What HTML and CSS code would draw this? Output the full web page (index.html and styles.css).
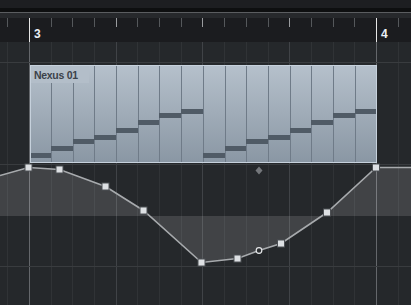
FILE: index.html
```html
<!DOCTYPE html>
<html lang="en">
<head>
    <meta charset="UTF-8">
    <title>Key Editor - Nexus 01</title>
    <link rel="stylesheet" href="styles.css">
</head>
<body>
    <div class="top-strip"></div>
    <div class="top-gap"></div>
    <div class="top-edge"></div>
    <div class="top-band"></div>

    <div class="ruler">
        <div class="tick"></div>
        <div class="tick bar"><span class="bar-num">3</span></div>
        <div class="tick"></div>
        <div class="tick"></div>
        <div class="tick"></div>
        <div class="tick beat"></div>
        <div class="tick"></div>
        <div class="tick"></div>
        <div class="tick"></div>
        <div class="tick beat"></div>
        <div class="tick"></div>
        <div class="tick"></div>
        <div class="tick"></div>
        <div class="tick beat"></div>
        <div class="tick"></div>
        <div class="tick"></div>
        <div class="tick"></div>
        <div class="tick bar"><span class="bar-num">4</span></div>
        <div class="tick"></div>
    </div>

    <div class="arrange">
        <!-- backdrop grid, sits under the lanes -->
        <div class="grid-cols">
            <div class="col"></div>
            <div class="col bar"></div>
            <div class="col"></div>
            <div class="col"></div>
            <div class="col"></div>
            <div class="col beat"></div>
            <div class="col"></div>
            <div class="col"></div>
            <div class="col"></div>
            <div class="col beat"></div>
            <div class="col"></div>
            <div class="col"></div>
            <div class="col"></div>
            <div class="col beat"></div>
            <div class="col"></div>
            <div class="col"></div>
            <div class="col"></div>
            <div class="col bar"></div>
            <div class="col"></div>
        </div>

        <div class="lane lane-head"></div>

        <div class="lane lane-part">
            <div class="part">
                <div class="part-title">Nexus 01</div>
                <div class="cells">
                    <div class="cell"><div class="note" style="margin-top: 87px"></div></div>
                    <div class="cell"><div class="note" style="margin-top: 80px"></div></div>
                    <div class="cell"><div class="note" style="margin-top: 73px"></div></div>
                    <div class="cell"><div class="note" style="margin-top: 69px"></div></div>
                    <div class="cell"><div class="note" style="margin-top: 62px"></div></div>
                    <div class="cell"><div class="note" style="margin-top: 54px"></div></div>
                    <div class="cell"><div class="note" style="margin-top: 47px"></div></div>
                    <div class="cell"><div class="note" style="margin-top: 43px"></div></div>
                    <div class="cell"><div class="note" style="margin-top: 87px"></div></div>
                    <div class="cell"><div class="note" style="margin-top: 80px"></div></div>
                    <div class="cell"><div class="note" style="margin-top: 73px"></div></div>
                    <div class="cell"><div class="note" style="margin-top: 69px"></div></div>
                    <div class="cell"><div class="note" style="margin-top: 62px"></div></div>
                    <div class="cell"><div class="note" style="margin-top: 54px"></div></div>
                    <div class="cell"><div class="note" style="margin-top: 47px"></div></div>
                    <div class="cell"><div class="note" style="margin-top: 43px"></div></div>
                </div>
            </div>
        </div>

        <div class="lane lane-auto">
            <svg class="auto-curve" width="411" height="101" viewBox="0 165 411 101">
                <polygon class="auto-fill" points="0,216 0,175.5 28.5,167.5 59.5,169.5 105.5,186.5 143.5,210.5 201.5,262.5 237.5,258.5 259,250.5 281,243.5 327,212.5 376,167.5 411,167.5 411,216"/>
                <polyline class="auto-line" points="0,175.5 28.5,167.5 59.5,169.5 105.5,186.5 143.5,210.5 201.5,262.5 237.5,258.5 259,250.5 281,243.5 327,212.5 376,167.5 411,167.5"/>
                <rect class="auto-pt" x="25" y="164" width="7" height="7"/>
                <rect class="auto-pt" x="56" y="166" width="7" height="7"/>
                <rect class="auto-pt" x="102" y="183" width="7" height="7"/>
                <rect class="auto-pt" x="140" y="207" width="7" height="7"/>
                <rect class="auto-pt" x="198" y="259" width="7" height="7"/>
                <rect class="auto-pt" x="234" y="255" width="7" height="7"/>
                <circle class="auto-ghost" cx="259" cy="250.5" r="2.8"/>
                <rect class="auto-pt" x="277.5" y="240" width="7" height="7"/>
                <rect class="auto-pt" x="323.5" y="209" width="7" height="7"/>
                <rect class="auto-pt" x="372.5" y="164" width="7" height="7"/>
                <polygon class="auto-mark" points="259,166.5 262.5,170.5 259,174.5 255.5,170.5"/>
            </svg>
        </div>

        <div class="lane lane-foot"></div>
    </div>
</body>
</html>
```

FILE: styles.css
```css
:root {
    --step: 21.6875px;
    --grid-bg: #25282b;
    --line-16th: #303336;
    --line-beat: #404347;
    --line-bar: #64676b;
}

body, html {
    margin: 0;
    padding: 0;
    width: 411px;
    height: 305px;
    overflow: hidden;
    background-color: #1c1d20;
    font-family: 'Liberation Sans', Arial, sans-serif;
}

.top-strip {
    height: 8px;
    background-color: #1d1e21;
}

.top-gap {
    height: 4px;
    background-color: #0e0f10;
}

.top-edge {
    height: 1px;
    background-color: #5b5d60;
}

.top-band {
    height: 5px;
    background-color: #27292c;
}

/* Ruler */
.ruler {
    display: flex;
    align-items: flex-start;
    height: 24px;
    padding-left: 7.3px;
    background-color: #1b1c1f;
    overflow: hidden;
}

.tick {
    flex: 0 0 var(--step);
    box-sizing: border-box;
    height: 9px;
    border-left: 1px solid #55585b;
}

.tick.beat {
    border-left-color: #9a9c9f;
}

.tick.bar {
    height: 24px;
    border-left-color: #e6e6e6;
    padding: 10px 0 0 4px;
}

.bar-num {
    display: block;
    font-size: 12px;
    line-height: 12px;
    font-weight: bold;
    color: #eaeff5;
}

/* Arrange area */
.arrange {
    position: relative;
    height: 263px;
    background-color: var(--grid-bg);
}

.grid-cols {
    position: absolute;
    top: 0;
    left: 0;
    right: 0;
    bottom: 0;
    display: flex;
    padding-left: 7.3px;
}

.col {
    flex: 0 0 var(--step);
    box-sizing: border-box;
    border-left: 1px solid var(--line-16th);
}

.col.beat {
    border-left-color: var(--line-beat);
}

.col.bar {
    border-left-color: var(--line-bar);
}

.lane {
    position: relative;
    border-bottom: 1px solid #393c3f;
}

.lane-head {
    height: 20px;
}

.lane-part {
    height: 99px;
    padding-top: 2px;
}

.lane-auto {
    height: 101px;
}

.lane-foot {
    border-bottom: none;
}

/* MIDI part */
.part {
    position: relative;
    margin-left: 30px;
    width: 347px;
    height: 98px;
    box-sizing: border-box;
    border: 1px solid #c6d1dc;
    background: linear-gradient(#b5c0cb, #8a97a4);
    overflow: hidden;
}

.part-title {
    position: absolute;
    top: 0;
    left: 0;
    width: 58px;
    height: 17px;
    box-sizing: border-box;
    padding: 3px 0 0 3px;
    background-color: #b3bec9;
    font-size: 10.5px;
    line-height: 12px;
    font-weight: bold;
    letter-spacing: -0.3px;
    color: #3c424a;
}

.cells {
    display: flex;
    height: 100%;
    margin-left: -1.7px;
}

.cell {
    flex: 0 0 var(--step);
    box-sizing: border-box;
    border-left: 1px solid #6f7b88;
}

.cell:first-child {
    border-left: none;
}

.note {
    height: 5px;
    margin-left: -1px;
    background-color: #505b66;
}

/* Automation */
.auto-curve {
    display: block;
    overflow: visible;
}

.auto-fill {
    fill: rgba(255, 255, 255, 0.13);
    stroke: none;
}

.auto-line {
    fill: none;
    stroke: #a7aaad;
    stroke-width: 1.6;
}

.auto-pt {
    fill: #dde0e3;
    stroke: #4d5054;
    stroke-width: 1;
}

.auto-ghost {
    fill: #2c2f32;
    stroke: #e4e6e8;
    stroke-width: 1.2;
}

.auto-mark {
    fill: #74777b;
}
```
